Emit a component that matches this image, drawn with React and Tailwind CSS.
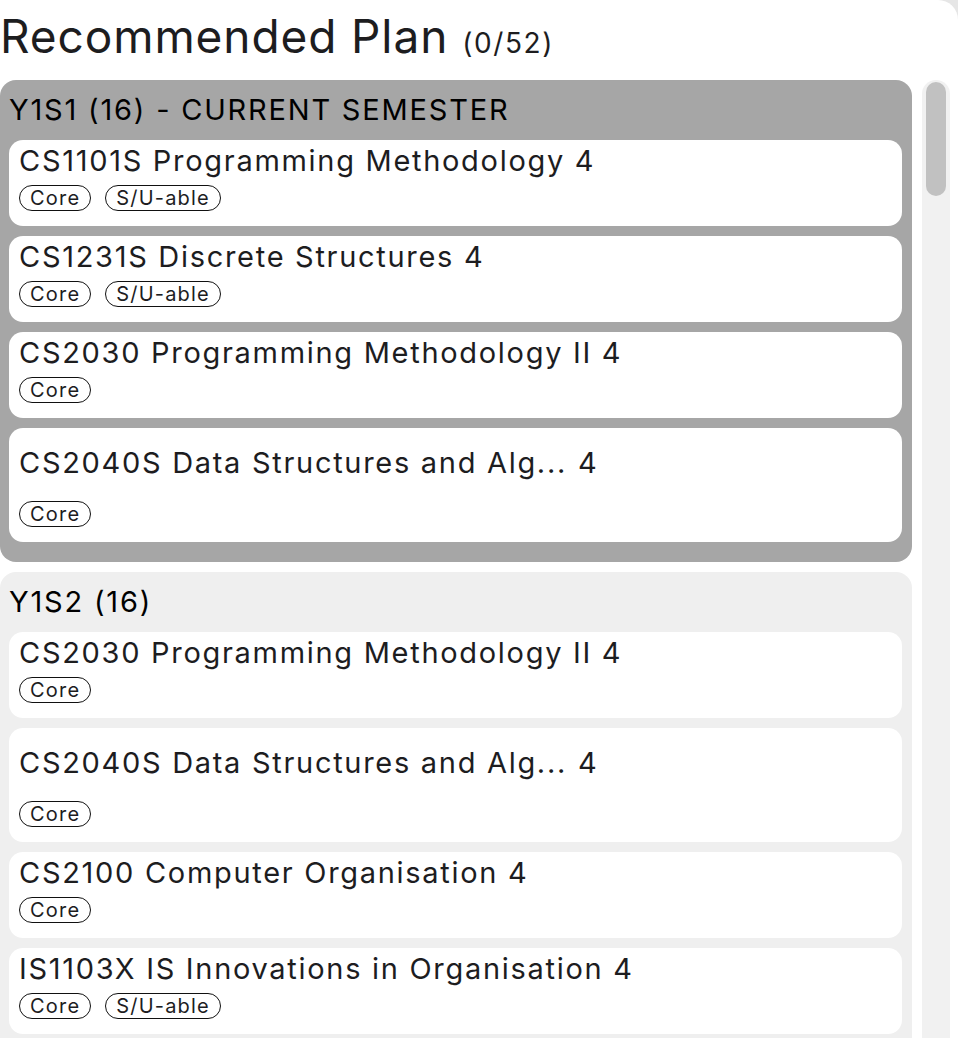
import React from "react";

const semesters = [
  {
    name: "Y1S1 (16) - CURRENT SEMESTER",
    current: true,
    modules: [
      { code: "CS1101S", title: "Programming Methodology", mc: 4, tags: ["Core", "S/U-able"] },
      { code: "CS1231S", title: "Discrete Structures", mc: 4, tags: ["Core", "S/U-able"] },
      { code: "CS2030", title: "Programming Methodology II", mc: 4, tags: ["Core"] },
      { code: "CS2040S", title: "Data Structures and Alg...", mc: 4, tags: ["Core"], truncated: true },
    ],
  },
  {
    name: "Y1S2 (16)",
    current: false,
    modules: [
      { code: "CS2030", title: "Programming Methodology II", mc: 4, tags: ["Core"] },
      { code: "CS2040S", title: "Data Structures and Alg...", mc: 4, tags: ["Core"], truncated: true },
      { code: "CS2100", title: "Computer Organisation", mc: 4, tags: ["Core"] },
      { code: "IS1103X", title: "IS Innovations in Organisation", mc: 4, tags: ["Core", "S/U-able"] },
    ],
  },
];

function Tag({ label }) {
  return (
    <span className="h-[26px] px-[10px] flex items-center rounded-full border-[1.5px] border-[#111] text-[20px] tracking-[1.2px] leading-none text-[#1d1d1f]">
      {label}
    </span>
  );
}

function ModuleCard({ mod }) {
  return (
    <div className="bg-white rounded-[14px] px-[10px] pt-[5px] pb-[15px]">
      <div
        className={
          mod.truncated
            ? "text-[29px] tracking-[1.7px] leading-[32px] text-[#1d1d1f] py-[14px] whitespace-nowrap"
            : "text-[29px] tracking-[1.7px] leading-[32px] text-[#1d1d1f] whitespace-nowrap"
        }
      >
        {mod.code} {mod.title}
        {mod.truncated ? <span className="ml-[11px]">{mod.mc}</span> : <span> {mod.mc}</span>}
      </div>
      <div className="mt-[8px] flex gap-[14px]">
        {mod.tags.map((t) => (
          <Tag key={t} label={t} />
        ))}
      </div>
    </div>
  );
}

function Semester({ sem }) {
  return (
    <div
      className={
        sem.current
          ? "bg-[#a6a6a6] rounded-[16px] pt-[10px] pb-[20px] px-[9px]"
          : "bg-[#efefef] rounded-[16px] pt-[10px] pb-[20px] px-[9px]"
      }
    >
      <div className="h-[40px] flex items-center text-[29px] tracking-[1.8px] text-black mb-[10px] whitespace-nowrap">
        {sem.name}
      </div>
      <div className="flex flex-col gap-[10px] pr-[1px]">
        {sem.modules.map((m, i) => (
          <ModuleCard key={i} mod={m} />
        ))}
      </div>
    </div>
  );
}

export default function App() {
  return (
    <div
      className="w-[958px] h-[1038px] overflow-hidden bg-[#e6e6e6]"
      style={{ fontFamily: "Inter, 'Noto Sans', sans-serif" }}
    >
      <div className="h-full bg-white rounded-tr-[20px] flex flex-col">
        <div className="h-[80px] flex items-baseline gap-[14px] pt-[10px] whitespace-nowrap">
          <span className="text-[46px] tracking-[0.9px] leading-[52px] text-[#1d1d1f]">Recommended Plan</span>
          <span className="text-[28px] tracking-[1.6px] text-[#1d1d1f]">(0/52)</span>
        </div>
        <div className="flex flex-1 min-h-0">
          <div className="w-[912px] flex flex-col gap-[10px]">
            {semesters.map((s) => (
              <Semester key={s.name} sem={s} />
            ))}
          </div>
          <div className="ml-[10px] w-[28px] bg-[#f1f1f1] rounded-t-[14px] pt-[2px] px-[4px]">
            <div className="h-[114px] rounded-full bg-[#c1c1c1]" />
          </div>
        </div>
      </div>
    </div>
  );
}
